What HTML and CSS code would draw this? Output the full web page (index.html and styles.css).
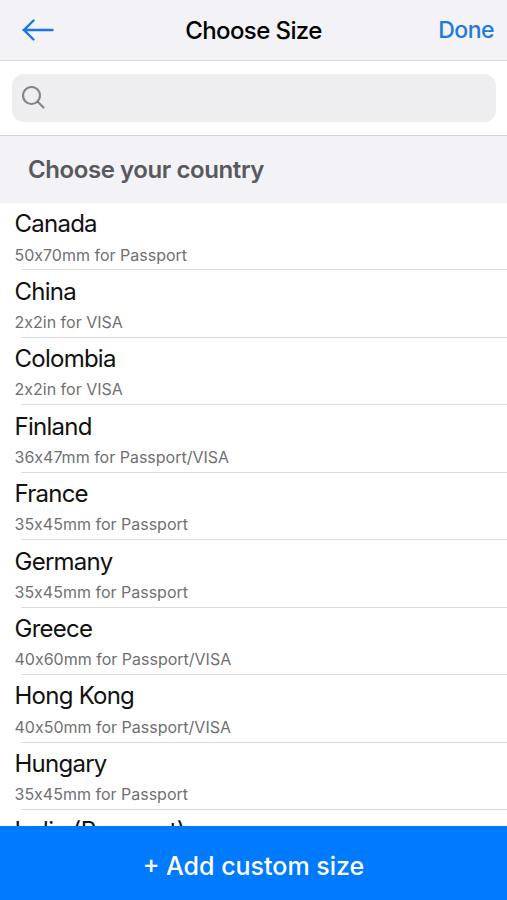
FILE: index.html
```html
<!DOCTYPE html>
<html lang="en">
<head>
<meta charset="utf-8">
<title>Choose Size</title>
<link rel="stylesheet" href="styles.css">
</head>
<body>
<div class="app">
  <header class="nav">
    <a class="back" aria-label="Back"><svg width="32" height="22" viewBox="0 0 32 22"><path d="M30.5 11H1.5M11.5 1.5L2 11l9.5 9.5"/></svg></a>
    <h1 class="title"><span>Choose Size</span></h1>
    <a class="done"><span>Done</span></a>
  </header>
  <div class="search"><div class="field"><svg width="24" height="24" viewBox="0 0 24 24"><circle cx="9.5" cy="9.5" r="8.5"/><path d="M15.5 15.5l6 6"/></svg></div></div>
  <h2 class="section"><span>Choose your country</span></h2>
  <ul class="list">
    <li class="row"><span class="name">Canada</span><span class="size">50x70mm for Passport</span></li>
    <li class="row"><span class="name">China</span><span class="size">2x2in for VISA</span></li>
    <li class="row"><span class="name">Colombia</span><span class="size">2x2in for VISA</span></li>
    <li class="row"><span class="name">Finland</span><span class="size">36x47mm for Passport/VISA</span></li>
    <li class="row"><span class="name">France</span><span class="size">35x45mm for Passport</span></li>
    <li class="row"><span class="name">Germany</span><span class="size">35x45mm for Passport</span></li>
    <li class="row"><span class="name">Greece</span><span class="size">40x60mm for Passport/VISA</span></li>
    <li class="row"><span class="name">Hong Kong</span><span class="size">40x50mm for Passport/VISA</span></li>
    <li class="row"><span class="name">Hungary</span><span class="size">35x45mm for Passport</span></li>
    <li class="row"><span class="name wide">India (Passport)</span></li>
  </ul>
  <button class="add"><span>+ Add custom size</span></button>
</div>
</body>
</html>
```
FILE: styles.css
```css
* { box-sizing: border-box; }
body { margin: 0; font-family: Inter, "Liberation Sans", sans-serif; font-feature-settings: "calt" 0; color: #000; background: #fff; }
.app { height: 900px; display: flex; flex-direction: column; overflow: hidden; }
.nav { height: 61px; flex: none; display: grid; grid-template-columns: 1fr auto 1fr; align-items: center; padding: 0 13px; background: #f2f2f7; border-bottom: 1px solid #d9d9de; }
.back { display: flex; padding-left: 9px; }
svg { fill: none; stroke: #1679e2; stroke-width: 2.4; stroke-linecap: round; }
.title { margin: 0; font-size: 24px; font-weight: 500; letter-spacing: -0.6px; }
.done { justify-self: end; font-size: 23px; font-weight: 500; letter-spacing: -0.5px; color: #217bd5; }
.search { height: 75px; flex: none; padding: 13px 11px 0 12px; border-bottom: 1px solid #d4d4d8; }
.field { height: 48px; border-radius: 12px; background: #eeeef0; display: flex; align-items: center; padding-left: 10px; }
.field svg { stroke: #858588; stroke-width: 2.2; }
.section { height: 67px; flex: none; margin: 0; padding-left: 28px; display: flex; align-items: center; background: #f2f2f7; color: #59595d; font-size: 24px; font-weight: 600; letter-spacing: -0.42px; }
.list { flex: 1; min-height: 0; margin: 0; padding: 0; list-style: none; overflow: hidden; }
.row { height: 67.45px; padding: 4.4px 0 0 14.5px; display: flex; flex-direction: column; align-items: flex-start; background: linear-gradient(#dcdcde, #dcdcde) 21px 100% / 100% 1px no-repeat; }
.name { font-size: 24px; line-height: 33px; letter-spacing: -0.75px; color: #111; }
.wide { letter-spacing: -0.55px; }
.size { font-size: 16px; line-height: 20px; margin-top: 4.2px; color: #707072; }
.add { height: 74px; flex: none; border: 0; padding: 5px 0 0; background: #007aff; color: #fff; font: 500 25px Inter, sans-serif; }
```
